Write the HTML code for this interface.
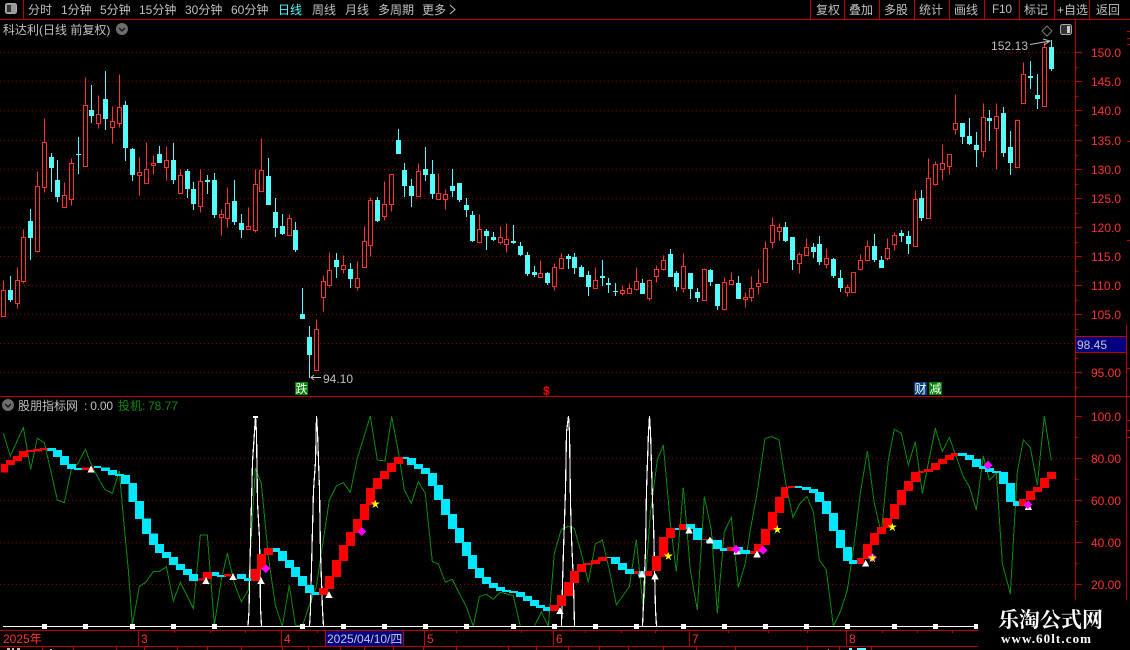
<!DOCTYPE html>
<html><head><meta charset="utf-8"><style>
html,body{margin:0;padding:0;background:#000;width:1130px;height:650px;overflow:hidden}
svg{display:block}
text{font-family:"Liberation Sans","WenQuanYi Zen Hei","Noto Sans CJK SC",sans-serif;font-size:12px}
.g{fill:#c0c0c0}.r{fill:#ff3232}
</style></head><body>
<svg width="1130" height="650" viewBox="0 0 1130 650" xmlns="http://www.w3.org/2000/svg">
<defs>
<polygon id="t" points="-11,10 0,-11 11,10" fill="#fff"/>
<polygon id="d" points="0,-13 13,0 0,13 -13,0" fill="#ff00ff"/>
<polygon id="s" points="0,-13 3,-4 13,-4 5,2 8,12 0,6 -8,12 -5,2 -13,-4 -3,-4" fill="#ffff00"/>
</defs>
<rect width="1130" height="650" fill="#000"/>
<g shape-rendering="crispEdges">
<g stroke="#900000" stroke-dasharray="1 3" fill="none">
<path d="M0 52.5H1075M0 81.5H1075M0 110.5H1075M0 140.5H1075M0 169.5H1075M0 198.5H1075M0 227.5H1075M0 256.5H1075M0 285.5H1075M0 314.5H1075M0 343.5H1075M0 372.5H1075"/>
<path d="M0 458.5H1075M0 500.5H1075M0 542.5H1075M0 584.5H1075"/>
</g>
<g stroke="#c00000" fill="none">
<path d="M0 19.5H1130M0 396.5H1130M23.5 0V19M810.5 0V19M844.5 0V19M879.5 0V19M914.5 0V19M949.5 0V19M984.5 0V19M1019.5 0V19M1054.5 0V19M1089.5 0V19"/>
<path d="M1075.5 20V600M1126.5 325V600"/>
<path d="M1075 52.5h7M1075 81.5h7M1075 110.5h7M1075 140.5h7M1075 169.5h7M1075 198.5h7M1075 227.5h7M1075 256.5h7M1075 285.5h7M1075 314.5h7M1075 372.5h7M1075 67.5h3M1075 96.5h3M1075 125.5h3M1075 155.5h3M1075 184.5h3M1075 213.5h3M1075 242.5h3M1075 271.5h3M1075 300.5h3M1075 329.5h3M1075 358.5h3M1075 387.5h3"/>
<path d="M1075 416.5h7M1075 458.5h7M1075 500.5h7M1075 542.5h7M1075 584.5h7M1075 437.5h3M1075 479.5h3M1075 521.5h3M1075 563.5h3"/>
<path d="M1127 31.5h3M1127 38.5h3M1127 44.5h3M1127 141.5h3M1127 240.5h3M1127 420.5h3M1127 430.5h3M1127 437.5h3M1127 368.5h3"/>
<path d="M0 630.5H978M0 646.5H978M138.5 630V646M281.5 630V646M325.5 630V646M403.5 630V646M424.5 630V646M553.5 630V646M689.5 630V646M846.5 630V646"/>
<path d="M174.5 631v2M210.5 631v2M245.5 631v2M317.5 631v2M456.5 631v2M521.5 631v2M585.5 631v2M621.5 631v2M655.5 631v2M728.5 631v2M768.5 631v2M807.5 631v2M882.5 631v2M917.5 631v2M952.5 631v2"/>
<path d="M42.5 647v3M73.5 647v3M116.5 647v3M144.5 647v3M177.5 647v3M207.5 647v3M241.5 647v3M282.5 647v3M308.5 647v3M340.5 647v3M364.5 647v3M393.5 647v3M423.5 647v3M456.5 647v3M508.5 647v3M536.5 647v3M568.5 647v3M599.5 647v3M628.5 647v3M663.5 647v3M696.5 647v3M735.5 647v3M807.5 647v3M839.5 647v3M871.5 647v3"/>
</g>
<g transform="translate(0 .5)" fill="none" stroke="#ff3232">
<path d="M3.5 280V290M1.5 290h4v26h-4zM17.5 267V280M17.5 303V308M15.5 280h4v23h-4zM23.5 229V237M23.5 281V283M21.5 237h4v44h-4zM37.5 171V186M37.5 251V252M35.5 186h4v65h-4zM44.5 118V142M44.5 187V192M42.5 142h4v45h-4zM64.5 182V195M62.5 195h4v12h-4zM71.5 158V163M71.5 199V205M69.5 163h4v36h-4zM85.5 77V105M83.5 105h4v61h-4zM98.5 95V114M98.5 123V128M96.5 114h4v9h-4zM112.5 106V121M112.5 127V143M110.5 121h4v6h-4zM119.5 74V107M119.5 123V127M117.5 107h4v16h-4zM139.5 157V172M139.5 175V195M137.5 172h4v3h-4zM146.5 142V169M144.5 169h4v14h-4zM153.5 155V163M153.5 165V174M151.5 163h4v2h-4zM166.5 146V160M166.5 167V180M164.5 160h4v7h-4zM180.5 169V175M178.5 175h4v18h-4zM200.5 169V181M200.5 206V212M198.5 181h4v25h-4zM221.5 209V214M221.5 217V235M219.5 214h4v3h-4zM227.5 187V203M227.5 218V227M225.5 203h4v15h-4zM248.5 207V226M246.5 226h4v3h-4zM255.5 169V184M255.5 230V232M253.5 184h4v46h-4zM261.5 138V170M259.5 170h4v21h-4zM289.5 214V218M287.5 218h4v17h-4zM316.5 319V329M314.5 329h4v41h-4zM323.5 275V281M323.5 297V311M321.5 281h4v16h-4zM329.5 252V270M329.5 285V287M327.5 270h4v15h-4zM343.5 255V265M343.5 269V273M341.5 265h4v4h-4zM357.5 261V278M357.5 287V290M355.5 278h4v9h-4zM364.5 226V241M362.5 241h4v26h-4zM370.5 197V200M370.5 245V256M368.5 200h4v45h-4zM384.5 181V204M384.5 216V220M382.5 204h4v12h-4zM391.5 204V211M389.5 174h4v30h-4z"/>
<path d="M418.5 163V171M416.5 171h4v25h-4zM438.5 173V193M436.5 193h4v6h-4zM445.5 189V194M445.5 199V209M443.5 194h4v5h-4zM479.5 214V229M477.5 229h4v13h-4zM500.5 226V237M500.5 242V244M498.5 237h4v5h-4zM506.5 223V239M506.5 244V252M504.5 239h4v5h-4zM540.5 260V273M538.5 273h4v4h-4zM554.5 263V267M554.5 286V290M552.5 267h4v19h-4zM561.5 253V258M559.5 258h4v10h-4zM595.5 267V280M593.5 280h4v8h-4zM622.5 285V290M622.5 293V295M620.5 290h4v3h-4zM629.5 283V288M627.5 288h4v5h-4zM636.5 267V281M636.5 289V290M634.5 281h4v8h-4zM649.5 279V280M649.5 298V300M647.5 280h4v18h-4zM656.5 265V269M656.5 276V282M654.5 269h4v7h-4zM663.5 255V260M663.5 269V270M661.5 260h4v9h-4zM683.5 253V266M683.5 288V292M681.5 266h4v22h-4zM704.5 268V269M702.5 269h4v31h-4zM724.5 277V282M724.5 309V310M722.5 282h4v27h-4zM731.5 272V280M729.5 280h4v4h-4zM745.5 292V297M745.5 299V307M743.5 297h4v2h-4zM751.5 276V288M751.5 297V301M749.5 288h4v9h-4zM758.5 269V283M758.5 286V294M756.5 283h4v3h-4zM765.5 241V248M763.5 248h4v34h-4zM772.5 217V225M772.5 242V248M770.5 225h4v17h-4zM779.5 223V227M779.5 231V240M777.5 227h4v4h-4zM799.5 252V254M799.5 263V273M797.5 254h4v9h-4zM806.5 238V247M804.5 247h4v8h-4zM826.5 248V258M826.5 264V268M824.5 258h4v6h-4zM847.5 284V287M847.5 292V296M845.5 287h4v5h-4zM851.5 272h4v20h-4zM860.5 254V260M860.5 269V270M858.5 260h4v9h-4zM867.5 240V246M867.5 260V261M865.5 246h4v14h-4zM887.5 238V248M887.5 258V260M885.5 248h4v10h-4zM894.5 232V235M894.5 244V250M892.5 235h4v9h-4zM915.5 190V199M913.5 199h4v47h-4zM928.5 158V178M926.5 178h4v40h-4zM935.5 161V164M935.5 184V185M933.5 164h4v20h-4zM942.5 144V163M942.5 169V180M940.5 163h4v6h-4zM949.5 166V174M947.5 154h4v12h-4zM955.5 94V123M955.5 129V134M953.5 123h4v6h-4zM983.5 103V117M983.5 151V157M981.5 117h4v34h-4zM996.5 103V116M996.5 128V169M994.5 116h4v12h-4zM1017.5 119V120M1015.5 120h4v47h-4zM1023.5 62V74M1021.5 74h4v29h-4zM1044.5 42V47M1042.5 47h4v59h-4z"/>
</g>
<g stroke="#54fcfc" fill="none">
<path d="M10.5 276V302M30.5 209V260M51.5 153V192M57.5 160V202M78.5 137V174M91.5 85V123M105.5 71V130M125.5 101V161M132.5 148V181M159.5 146V163M173.5 143V184M187.5 169V198M193.5 182V210M207.5 175V194M214.5 173V218M234.5 180V225M241.5 214V238M268.5 158V205M275.5 198V237M282.5 214V235M295.5 222V252M302.5 288V319M309.5 326V378M336.5 253V278M350.5 263V288M377.5 197V222M398.5 129V154M404.5 163V197M411.5 179V207M425.5 147V181M432.5 160V199M452.5 169V197M459.5 183V202M466.5 198V217M472.5 211V242M486.5 229V250M493.5 232V241M513.5 225V244M520.5 242V256M527.5 252V276M534.5 266V277M547.5 272V285M568.5 254V269M574.5 253V274M581.5 265V277M588.5 271V296M602.5 260V286M608.5 278V293M615.5 283V296M642.5 279V294M670.5 249V277M676.5 271V291M690.5 273V299M697.5 288V302M710.5 269V286M717.5 284V310M738.5 276V299M785.5 222V242M792.5 237V270M813.5 243V258M819.5 236V265M833.5 258V278M840.5 270V292M874.5 234V262M881.5 256V268M901.5 230V242M908.5 231V254M921.5 190V221M962.5 123V144M969.5 118V145M976.5 132V167M989.5 110V141M1003.5 107V157M1010.5 131V175M1030.5 61V89M1037.5 74V109M1051.5 40V71"/>
</g>
<path fill="#54fcfc" d="M8 290h5v10h-5zM28 221h5v17h-5zM49 157h5v11h-5zM55 180h5v17h-5zM76 154h5v1h-5zM89 110h5v6h-5zM103 99h5v20h-5zM123 105h5v43h-5zM130 149h5v26h-5zM157 154h5v9h-5zM171 160h5v20h-5zM185 171h5v18h-5zM191 189h5v15h-5zM205 180h5v2h-5zM212 180h5v35h-5zM232 201h5v21h-5zM239 223h5v7h-5zM266 176h5v29h-5zM273 212h5v16h-5zM280 226h5v8h-5zM293 230h5v20h-5zM300 314h5v5h-5zM307 337h5v18h-5zM334 260h5v7h-5zM348 269h5v10h-5zM375 200h5v21h-5zM396 140h5v14h-5zM402 170h5v16h-5zM409 186h5v10h-5zM423 169h5v6h-5zM430 174h5v20h-5zM450 186h5v5h-5zM457 183h5v17h-5zM464 205h5v5h-5zM470 215h5v26h-5zM484 231h5v5h-5zM491 237h5v3h-5zM511 241h5v2h-5zM518 246h5v9h-5zM525 255h5v19h-5zM532 272h5v3h-5zM545 273h5v10h-5zM566 256h5v3h-5zM572 257h5v11h-5zM579 267h5v10h-5zM586 275h5v12h-5zM600 276h5v2h-5zM606 283h5v2h-5zM613 291h5v1h-5zM640 283h5v11h-5zM668 254h5v23h-5zM674 273h5v14h-5zM688 273h5v16h-5zM695 292h5v6h-5zM708 270h5v12h-5zM715 284h5v22h-5zM736 283h5v16h-5zM783 227h5v14h-5zM790 237h5v23h-5zM811 247h5v5h-5zM817 244h5v18h-5zM831 259h5v17h-5zM838 278h5v10h-5zM872 246h5v14h-5zM879 260h5v8h-5zM899 233h5v3h-5zM906 236h5v8h-5zM919 198h5v20h-5zM960 123h5v14h-5zM967 136h5v8h-5zM974 145h5v5h-5zM987 118h5v3h-5zM1001 113h5v40h-5zM1008 147h5v16h-5zM1028 76h5v2h-5zM1035 95h5v4h-5zM1049 47h5v22h-5z"/>

<!-- green line -->
<g transform="translate(0 390) scale(.33333)" fill="none" stroke="#0a8a0a" stroke-width="3">
<polyline points="10,130 31,198 70,112 92,238 112,145 133,158 172,330 193,338 214,238 233,222 256,178 277,232 314,298 337,310 358,243 370,380 385,540 397,705 418,590 439,575 460,544 478,545 499,530 520,633 541,577 580,655 601,435 622,435 643,705 664,570 682,490 703,580 724,635 745,600 766,235 784,280 805,500 826,645 847,709 868,585 886,705 907,709 928,645 949,590 970,450 988,330 1009,288 1030,278 1051,307 1072,205 1111,78 1132,210 1155,213 1175,80 1196,190 1213,300 1234,340 1255,275 1276,310 1297,515 1315,522 1336,577 1357,568 1378,610 1399,650 1420,709 1438,620 1459,613 1480,628 1501,607 1540,617 1561,709 1603,709 1624,666 1645,709 1663,490 1684,418 1705,409 1723,415 1744,490 1765,577 1786,462 1807,450 1828,540 1849,645 1888,590 1909,448 1930,660 1951,370 1972,210 1990,165 2011,400 2029,545 2050,292 2071,540 2092,660 2113,320 2134,420 2152,670 2173,425 2194,382 2215,592 2236,520 2250,425"/>
</g>
<g transform="translate(750 390) scale(.33333)" fill="none" stroke="#0a8a0a" stroke-width="3">
<polyline points="0,425 21,310 45,145 66,140 87,150 108,285 129,382 150,340 171,320 190,365 208,510 229,540 250,709 271,665 292,600 310,480 331,310 352,183 373,340 394,430 415,210 433,118 454,130 475,225 496,155 517,310 556,115 577,185 598,142 640,260 658,290 679,360 700,198 718,270 739,250 757,520 781,612 802,245 820,150 841,172 862,285 883,78 904,212"/>
</g>
<!-- white spikes -->
<g fill="none" stroke="#fff">
<path d="M3 626.5H976"/>
<g stroke-width="1.2">
<polyline points="248,626 249,611 250,563 251,522 252.5,462 254.5,432 255.5,416 256.5,433 257.5,503 259.5,538 260.5,608 261.5,626"/>
<polyline points="309.5,626 310.5,610 311.5,567 313.5,490 315.5,462 316.5,416 317.5,432 319.5,490 320.5,553 322.5,610 323.5,626"/>
<polyline points="561.5,626 562.5,583 563.5,550 565.5,490 566.5,432 568.5,416 569.5,433 570.5,503 571.5,538 573.5,583 574.5,626"/>
<polyline points="642.5,626 643.5,603 645.5,550 646.5,490 648.5,432 649.5,416 650.5,432 652.5,500 653.5,523 655.5,610 656.5,626"/>
</g>
</g>
<path fill="#fff" d="M253 416h5v2h-5zM42 624h5v5h-5zM83 624h5v5h-5zM130 624h5v5h-5zM171 624h5v5h-5zM212 624h5v5h-5zM300 624h5v5h-5zM341 624h5v5h-5zM382 624h5v5h-5zM423 624h5v5h-5zM464 624h5v5h-5zM511 624h5v5h-5zM552 624h5v5h-5zM593 624h5v5h-5zM634 624h5v5h-5zM681 624h5v5h-5zM722 624h5v5h-5zM763 624h5v5h-5zM804 624h5v5h-5zM845 624h5v5h-5zM892 624h5v5h-5zM933 624h5v5h-5zM974 624h5v5h-5z"/>

<!-- indicator blocks -->
<g transform="translate(0 390) scale(.33333)">
<path fill="#00e8ff" d="M141 174H168V183H141zM159 180H186V201H159zM180 198H207V225H180zM201 222H228V237H201zM222 234H249V240H222zM282 228H303V234H282zM303 232H330V243H303zM324 240H351V255H324zM345 252H372V258H345zM363 255H390V282H363zM385 279H411V336H385zM405 333H432V387H405zM426 385H453V432H426zM447 430H474V465H447zM465 462H492V489H465zM486 486H513V504H486zM507 501H534V525H507zM528 522H555V540H528zM549 537H576V555H549zM567 552H594V573H567zM630 546H657V558H630zM651 555H678V561H651zM711 552H738V567H711zM732 564H759V573H732zM813 474H840V486H813zM834 483H861V513H834zM855 510H882V534H855zM873 531H900V561H873zM894 558H921V588H894zM915 585H942V609H915zM936 606H963V615H936z"/>
<path fill="#ff0000" d="M3 222H24V248H3zM18 210H45V225H18zM39 198H66V213H39zM57 183H84V201H57zM78 180H105V186H78zM99 177H126V185H99zM120 174H142V180H120zM246 232H282V240H246zM594 565H612V572H594zM609 546H636V567H609zM672 552H693V560H672zM753 537H780V573H753zM771 492H798V540H771zM792 474H819V495H792zM957 594H984V615H957zM975 558H1002V597H975zM996 510H1023V561H996zM1017 465H1044V513H1017zM1038 426H1065V468H1038zM1059 387H1086V429H1059zM1080 342H1107V390H1080zM1098 294H1125V345H1098zM1119 264H1146V297H1119z"/>
</g>
<g transform="translate(380 390) scale(.33333)">
<path fill="#00e8ff" d="M60 201H87V207H60zM81 204H108V225H81zM102 222H129V237H102zM123 234H150V252H123zM144 249H171V288H144zM162 285H189V330H162zM183 327H210V375H183zM204 372H231V417H204zM225 414H252V459H225zM246 456H273V498H246zM264 495H291V537H264zM285 534H312V564H285zM306 561H333V582H306zM327 579H354V594H327zM348 591H375V603H348zM366 600H393V606H366zM387 603H414V609H387zM408 606H435V621H408zM429 618H456V633H429zM450 630H477V648H450zM468 645H495V654H468zM489 651H516V663H489zM672 501H693V504H672zM693 501H720V522H693zM714 519H741V540H714zM735 537H762V552H735zM774 543H795V558H774zM876 414H897V420H876zM918 402H945V417H918zM939 414H966V450H939zM978 447H999V459H978zM999 450H1026V477H999zM1020 474H1047V483H1020zM1062 471H1089V492H1062zM1083 480H1110V492H1083z"/>
<path fill="#ff0000" d="M-6 270H6V297H-6zM0 243H27V267H0zM21 219H48V246H21zM42 201H69V222H42zM510 645H537V663H510zM531 615H558V648H531zM552 576H579V618H552zM570 543H597V579H570zM591 522H618V546H591zM612 519H639V525H612zM633 510H660V522H633zM654 501H681V513H654zM762 543H777V552H762zM795 543H816V558H795zM816 498H843V543H816zM837 441H864V501H837zM858 414H885V444H858zM897 402H918V420H897zM966 447H984V450H966zM1041 471H1062V483H1041z"/>
</g>
<g transform="translate(750 390) scale(.33333)">
<path fill="#00e8ff" d="M135 288H156V294H135zM156 291H183V300H156zM177 297H204V309H177zM195 306H222V336H195zM216 333H243V372H216zM237 369H264V423H237zM258 420H285V474H258zM279 471H306V513H279zM297 510H324V522H297zM624 189H651V198H624zM645 195H672V210H645zM666 207H693V231H666zM687 228H714V237H687zM705 234H732V246H705zM726 243H753V249H726zM747 246H774V282H747zM768 279H795V336H768zM789 333H816V348H789z"/>
<path fill="#ff0000" d="M0 483H15V492H0zM12 462H39V486H12zM33 417H60V465H33zM54 366H81V420H54zM75 321H102V369H75zM93 291H114V324H93zM114 288H135V294H114zM321 504H342V522H321zM339 462H366V507H339zM360 429H387V465H360zM381 411H408V432H381zM399 384H426V414H399zM420 342H447V387H420zM441 300H468V345H441zM462 273H489V303H462zM483 246H510V276H483zM504 243H522V249H504zM522 237H549V246H522zM543 219H570V240H543zM564 207H591V222H564zM585 195H612V210H585zM603 189H624V198H603zM807 327H828V348H807zM828 303H855V330H828zM849 291H876V306H849zM870 264H897V294H870zM891 246H918V267H891z"/>
</g>
<!-- markers -->
<g transform="translate(0 390) scale(.33333)">
<use href="#t" x="273" y="238"/><use href="#t" x="618" y="572"/><use href="#t" x="699" y="560"/><use href="#t" x="783" y="572"/><use href="#t" x="987" y="614"/>
<use href="#d" x="798" y="536"/><use href="#d" x="1086" y="425"/><use href="#s" x="1126" y="342"/>
</g>
<g transform="translate(380 390) scale(.33333)">
<use href="#t" x="540" y="662"/><use href="#t" x="786" y="552"/><use href="#t" x="825" y="558"/><use href="#t" x="927" y="420"/><use href="#t" x="990" y="450"/><use href="#t" x="1071" y="483"/><use href="#t" x="1131" y="492"/>
<use href="#d" x="1068" y="478"/><use href="#s" x="865" y="498"/>
</g>
<g transform="translate(750 390) scale(.33333)">
<use href="#t" x="347" y="520"/><use href="#t" x="835" y="350"/>
<use href="#d" x="39" y="481"/><use href="#d" x="367" y="503"/><use href="#d" x="714" y="226"/><use href="#d" x="834" y="344"/>
<use href="#s" x="82" y="418"/><use href="#s" x="367" y="504"/><use href="#s" x="427" y="411"/>
</g>
<!-- boxes -->
<rect x="1076" y="337" width="50" height="15" fill="#000080"/>
<path d="M1076 336.5H1126M1076 352.5H1126" stroke="#c00000"/>
<rect x="326" y="631" width="77" height="15" fill="#000080"/>
<rect x="295" y="382" width="13" height="13" fill="#008000"/>
<rect x="914" y="382" width="13" height="13" fill="#004080"/>
<rect x="929" y="382" width="13" height="13" fill="#008000"/>
<!-- bottom strip fragments -->
<path fill="#bbb" d="M7 648h3v2H7zM12 648h2v2h-2zM17 648h3v2h-3zM50 649h2v1h-2zM828 649h1v1h-1z"/>
<path fill="#54fcfc" d="M849 648h3v2h-3zM857 648h9v2h-9z"/>
<!-- watermark background -->
<rect x="978" y="600" width="152" height="50" fill="#000"/>
</g>

<!-- top left icon -->
<rect x="5.5" y="3.5" width="11" height="10" rx="2" fill="#999" stroke="#aaa"/>
<rect x="7" y="5" width="4" height="7" fill="#333"/>
<!-- right icons -->
<path d="M1047 26l5 5-5 5-5-5z" fill="none" stroke="#777"/>
<rect x="1060.5" y="24.5" width="11" height="10" rx="2" fill="#333" stroke="#aaa"/>
<rect x="1067" y="26" width="3" height="7" fill="#ccc"/>
<circle cx="122" cy="29" r="6" fill="#6e6e6e"/>
<path d="M119 28l3 3 3-3" fill="none" stroke="#111" stroke-width="1.3"/>
<circle cx="8" cy="405" r="6" fill="#6e6e6e"/>
<path d="M5 404l3 3 3-3" fill="none" stroke="#111" stroke-width="1.3"/>

<!-- top bar text -->
<g class="g">
<text x="28" y="14" class="g">分时</text>
<text x="61" y="14" class="g">1分钟</text>
<text x="100" y="14" class="g">5分钟</text>
<text x="139" y="14" class="g">15分钟</text>
<text x="185" y="14" class="g">30分钟</text>
<text x="231" y="14" class="g">60分钟</text>
<text x="278" y="14" fill="#54fcfc">日线</text>
<text x="312" y="14" class="g">周线</text>
<text x="345" y="14" class="g">月线</text>
<text x="378" y="14" class="g">多周期</text>
<text x="422" y="14" class="g">更多</text>
<path d="M450 5l5 4.5-5 4.5" fill="none" stroke="#c0c0c0"/>
<text x="816" y="14" class="g">复权</text>
<text x="849" y="14" class="g">叠加</text>
<text x="884" y="14" class="g">多股</text>
<text x="919" y="14" class="g">统计</text>
<text x="954" y="14" class="g">画线</text>
<text x="992" y="13" class="g" textLength="20">F10</text>
<text x="1024" y="14" class="g">标记</text>
<text x="1057" y="14" class="g">+自选</text>
<text x="1096" y="14" class="g">返回</text>
<text x="3" y="34" class="g">科达利(日线 前复权)</text>
</g>
<text x="991" y="50" fill="#c0c0c0" textLength="37">152.13</text>
<path d="M1030 44.5L1050 41M1043 39l7 2-6 4" fill="none" stroke="#c0c0c0"/>
<text x="323" y="383" fill="#c0c0c0" textLength="30">94.10</text>
<path d="M311 377.5H321M314 375l-3 2.5 3 2.5" fill="none" stroke="#c0c0c0"/>
<text x="295.5" y="393" fill="#fff">跌</text>
<text x="914.5" y="393" fill="#fff">财</text>
<text x="929.5" y="393" fill="#fff">减</text>
<text x="543" y="395" fill="#ff0000" font-weight="bold">$</text>

<!-- axis labels -->
<g class="r">
<text x="1091" y="57" textLength="30">150.0</text>
<text x="1091" y="86" textLength="30">145.0</text>
<text x="1091" y="115" textLength="30">140.0</text>
<text x="1091" y="145" textLength="30">135.0</text>
<text x="1091" y="174" textLength="30">130.0</text>
<text x="1091" y="203" textLength="30">125.0</text>
<text x="1091" y="232" textLength="30">120.0</text>
<text x="1091" y="261" textLength="30">115.0</text>
<text x="1091" y="290" textLength="30">110.0</text>
<text x="1091" y="319" textLength="30">105.0</text>
<text x="1091" y="377" textLength="30">95.00</text>
<text x="1091" y="421" textLength="30">100.0</text>
<text x="1091" y="463" textLength="30">80.00</text>
<text x="1091" y="505" textLength="30">60.00</text>
<text x="1091" y="547" textLength="30">40.00</text>
<text x="1091" y="589" textLength="30">20.00</text>
<text x="3" y="643">2025年</text>
<text x="141" y="643">3</text>
<text x="284" y="643">4</text>
<text x="427" y="643">5</text>
<text x="556" y="643">6</text>
<text x="692" y="643">7</text>
<text x="849" y="643">8</text>
</g>
<text x="1077" y="349" fill="#c8c8c8" textLength="30">98.45</text>
<text x="327" y="643" fill="#c8c8c8">2025/04/10/四</text>
<text x="18" y="410" fill="#c0c0c0">股朋指标网</text>
<text x="84" y="410" fill="#c0c0c0" textLength="29">: 0.00</text>
<text x="118" y="410" fill="#0a8a0a">投机:</text>
<text x="148" y="410" fill="#0a8a0a" textLength="30">78.77</text>

<!-- watermark -->
<text x="998" y="627" fill="#fff" style="font-family:'Noto Serif CJK SC','Liberation Serif',serif;font-size:21px;font-weight:bold">乐淘公式网</text>
<text x="1001" y="643" fill="#fff" textLength="90" style="font-family:'Liberation Serif',serif;font-size:13px;font-weight:bold">www.60lt.com</text>
</svg>
</body></html>
